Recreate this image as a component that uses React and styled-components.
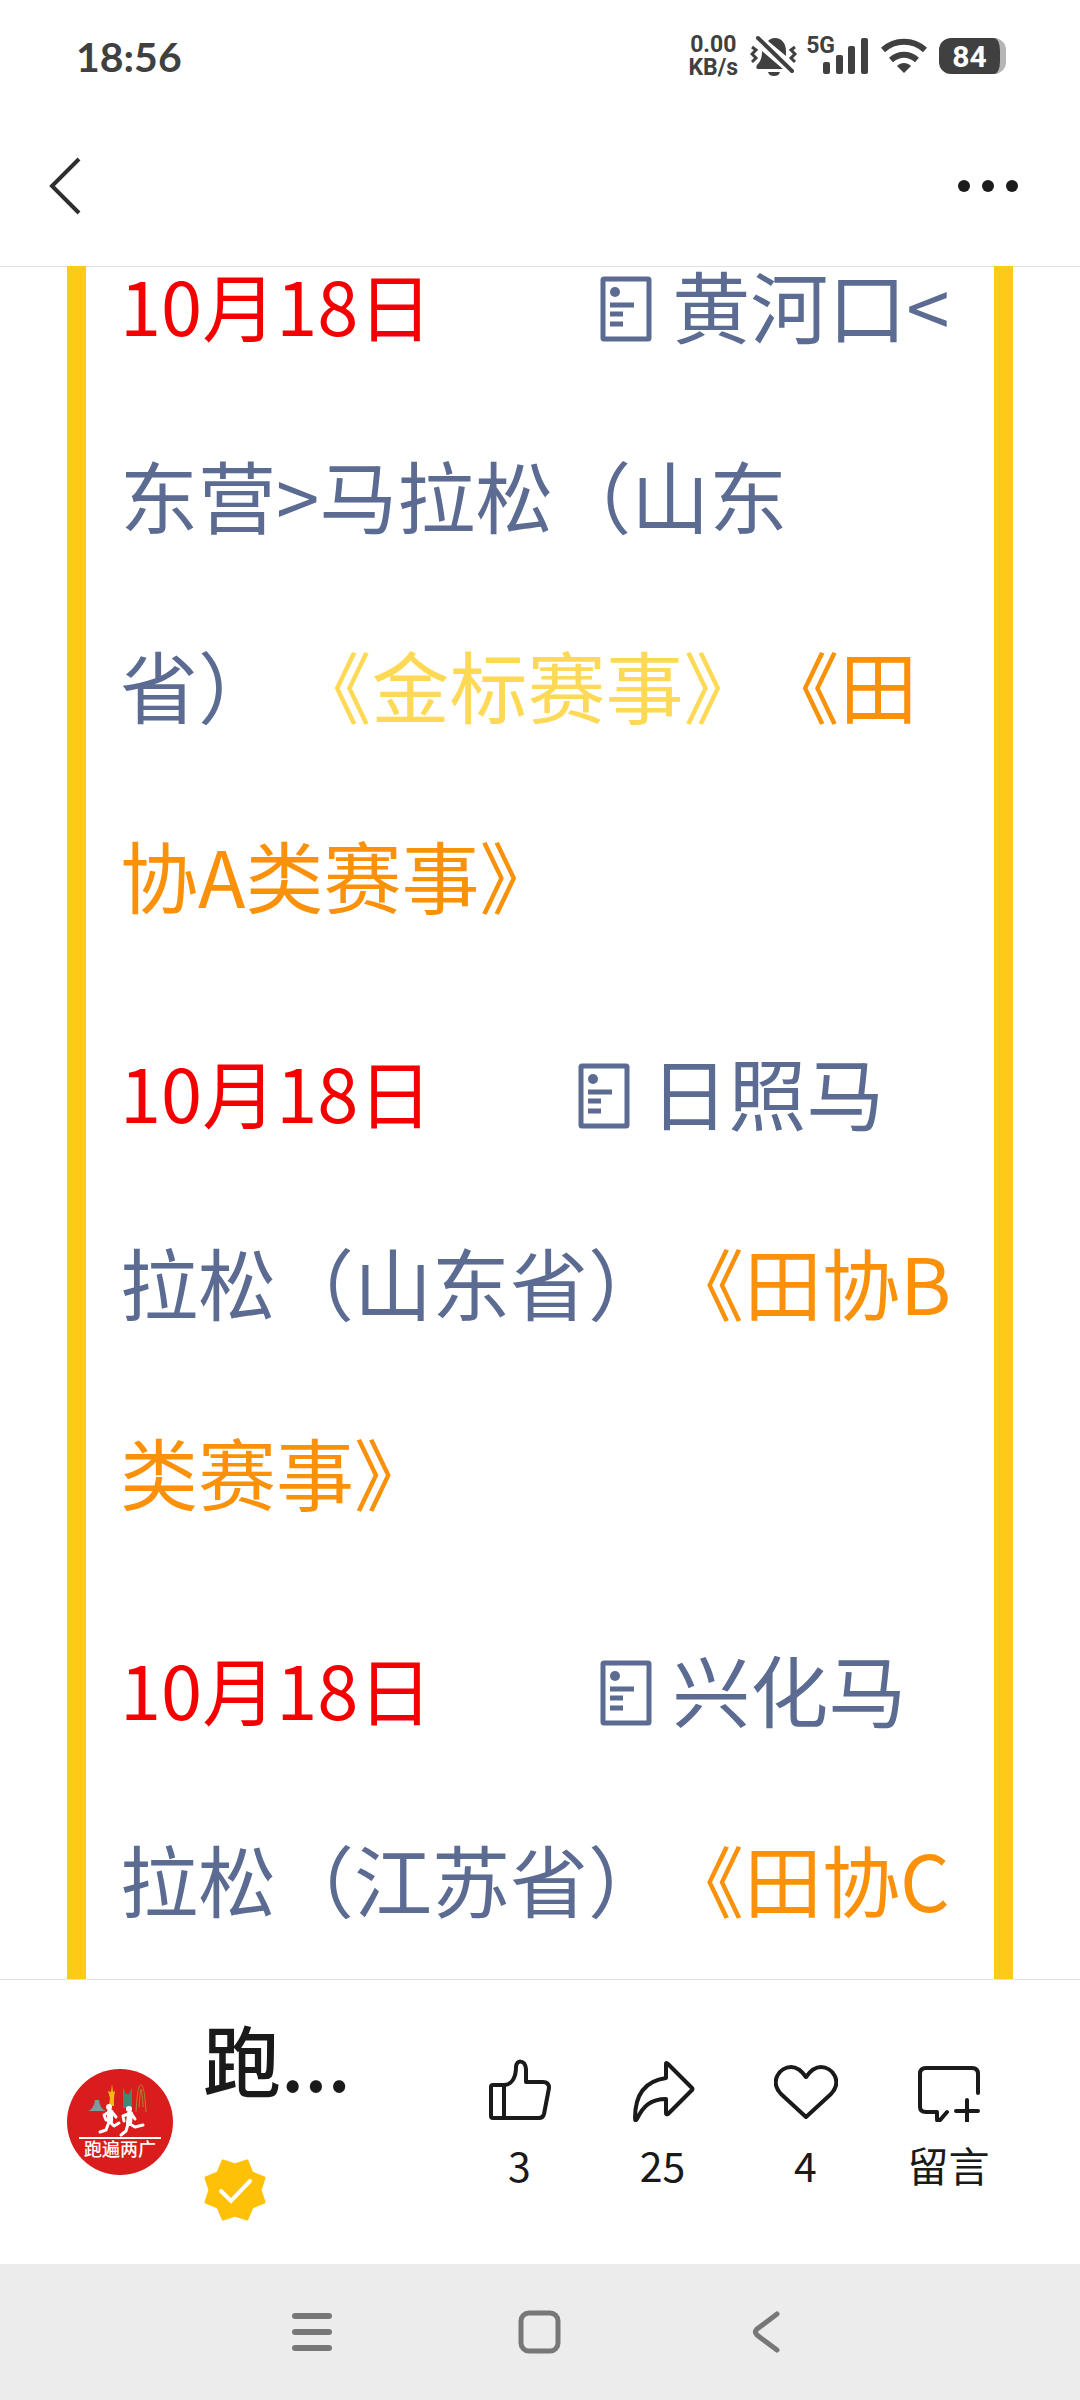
import styled, { createGlobalStyle } from "styled-components";

const races = [
  {
    id: 1,
    date: "10月18日",
    wide: true,
    lines: [
      [{ text: "黄河口<", tone: "link" }],
      [{ text: "东营>马拉松（山东", tone: "link" }],
      [
        { text: "省）\u00a0", tone: "link" },
        { text: "《金标赛事》", tone: "gold" },
        { text: "《田", tone: "orange" },
      ],
      [{ text: "协A类赛事》", tone: "orange" }],
    ],
  },
  {
    id: 2,
    date: "10月18日",
    wide: false,
    lines: [
      [{ text: "日照马", tone: "link" }],
      [
        { text: "拉松（山东省）", tone: "link" },
        { text: "《田协B", tone: "orange" },
      ],
      [{ text: "类赛事》", tone: "orange" }],
    ],
  },
  {
    id: 3,
    date: "10月18日",
    wide: true,
    lines: [
      [{ text: "兴化马", tone: "link" }],
      [
        { text: "拉松（江苏省）", tone: "link" },
        { text: "《田协C", tone: "orange" },
      ],
    ],
  },
];

const BellOffIcon = () => (
  <svg width="48" height="42" viewBox="0 0 48 42" fill="#404040">
    <path d="M18 6C20 4 22 3 25 3c7 0 11 6 11 13v5zM12 16l21 18H8c-2 0-2-2-1-4 4-4 5-8 5-14zM18 37h12c-1 3-3 4-6 4s-5-1-6-4z" />
    <path d="M8 3l34 33" stroke="#404040" strokeWidth="4" strokeLinecap="round" />
    <path
      d="M2 12l4 3-4 4 4 4-4 4M45 12l-4 3 4 4-4 4 4 4"
      fill="none"
      stroke="#404040"
      strokeWidth="3"
    />
  </svg>
);

const SignalIcon = () => (
  <svg width="46" height="36" viewBox="0 0 46 36" fill="#404040">
    <rect x="0" y="24" width="7" height="12" rx="2" />
    <rect x="13" y="17" width="7" height="19" rx="2" />
    <rect x="25" y="8" width="7" height="28" rx="2" />
    <rect x="38" y="0" width="7" height="36" rx="2" />
  </svg>
);

const WifiIcon = () => (
  <svg width="46" height="36" viewBox="0 0 46 36" fill="none" stroke="#404040" strokeWidth="6">
    <path d="M2 12C14 1 32 1 44 12M10 22c8-7 18-7 26 0" />
    <path d="M16 28c4-4 10-4 14 0l-7 7z" fill="#404040" stroke="none" />
  </svg>
);

const NoteIcon = () => (
  <svg width="52" height="66" viewBox="0 0 52 66" fill="none" stroke="#5b6b92" strokeWidth="5">
    <rect x="3" y="3" width="46" height="60" rx="1" />
    <circle cx="15" cy="16" r="5" fill="#5b6b92" stroke="none" />
    <path d="M10 29h24M10 38h13M10 48h13" />
  </svg>
);

const LikeIcon = () => (
  <svg width="64" height="64" viewBox="0 0 64 64">
    <path d="M3 29q0-2 2-2h11c8 0 12-8 12-18 0-7 9-8 10 2v13h17q6 0 6 6l-5 26q-1 4-5 4H5q-2 0-2-2zM16 27v33" />
  </svg>
);

const ShareIcon = () => (
  <svg width="64" height="64" viewBox="0 0 64 64">
    <path d="M35 6q0-2 2 0l24 24q1 1 0 2L37 56q-2 1-2-1V41C20 41 12 48 6 61q-2 3-2-1C4 37 14 23 35 20z" />
  </svg>
);

const HeartIcon = () => (
  <svg width="64" height="64" viewBox="0 0 64 64">
    <path d="M32 59L7 36C-5 23 6 9 17 9q8 0 15 10Q39 9 47 9c11 0 22 14 10 27z" />
  </svg>
);

const CommentIcon = () => (
  <svg width="64" height="64" viewBox="0 0 64 64">
    <path d="M61 35V16q0-6-6-6H9q-6 0-6 6v33q0 5 6 5h11v7q0 4 4 0l6-7M50 42v22M39 53h22" />
  </svg>
);

const VerifiedIcon = () => (
  <svg width="64" height="64" viewBox="0 0 64 64">
    <path
      d="M20 3l12 4 12-4 5 12 12 5-4 12 4 12-12 5-5 12-12-4-12 4-5-12-12-5 4-12-4-12 12-5z"
      fill="#ffc107"
      stroke="#ffc107"
      strokeWidth="3"
      strokeLinejoin="round"
    />
    <path d="M18 33l10 10 19-20" fill="none" stroke="#fff" strokeWidth="4" strokeLinecap="round" />
  </svg>
);

const Logo = () => (
  <svg width="106" height="106" viewBox="0 0 106 106" role="img" aria-label="跑遍两广">
    <circle cx="53" cy="53" r="53" fill="#d91c1c" />
    <path d="M21 42q6-2 7-11h4q1 9 7 11z" fill="#7f9aa0" />
    <path d="M42 37l1-8-2-7 3 1 1-8 1 8 2-1-1 7v8z" fill="#f2b90f" />
    <path d="M56 39V18l3 7h3l3-7v21z" fill="#3d8a7c" />
    <path
      d="M69 43c1-16 2-27 5-27s4 13 5 27M72 38c1-10 1-14 2-18 1 5 2 10 2 18"
      fill="none"
      stroke="#a98a35"
    />
    <g fill="none" stroke="#fff" strokeLinecap="round" strokeLinejoin="round">
      <path d="M43 43v9M63 45l-1 9" strokeWidth="6" />
      <path
        d="M42 43l-5 3 2 5M45 43l4 5M42 53l-3 8-6 2M44 54l3 3 5-3M61 45l-5 2 1 5M64 44l4 6M61 55l-2 7-5 4M63 55l5 3 8-2"
        strokeWidth="3"
      />
    </g>
    <circle cx="42" cy="38" r="3" fill="#fff" />
    <circle cx="62" cy="40" r="3" fill="#fff" />
    <path d="M12 69h82" stroke="#fff" strokeWidth="2" />
    <text x="53" y="87" textAnchor="middle" fontSize="18" fontWeight="500" fill="#fff">
      跑遍两广
    </text>
  </svg>
);

const App = () => {
  return (
    <Page>
      <GlobalStyle />
      <StatusBar>
        <Time>18:56</Time>
        <Indicators>
          <Speed>
            <span>0.00</span>
            <span>KB/s</span>
          </Speed>
          <BellOffIcon />
          <Network>
            <small>5G</small>
            <SignalIcon />
          </Network>
          <WifiIcon />
          <Battery>84</Battery>
        </Indicators>
      </StatusBar>

      <Header>
        <IconButton aria-label="返回">
          <svg width="34" height="60" viewBox="0 0 34 60" fill="none" stroke="#2e2e2e" strokeWidth="4">
            <path d="M31 3L4 30l27 27" />
          </svg>
        </IconButton>
        <IconButton aria-label="更多">
          <svg width="60" height="14" viewBox="0 0 60 14" fill="#1c1c1c">
            <circle cx="6" cy="7" r="6" />
            <circle cx="30" cy="7" r="6" />
            <circle cx="54" cy="7" r="6" />
          </svg>
        </IconButton>
      </Header>

      <Content>
        <Article>
          {races.map((race) => (
            <Race key={race.id}>
              {race.lines.map((line, i) => (
                <Line key={i}>
                  {i === 0 && (
                    <>
                      <RaceDate $wide={race.wide}>{race.date}</RaceDate>
                      <Note>
                        <NoteIcon />
                      </Note>
                    </>
                  )}
                  {line.map((part) =>
                    part.tone === "link" ? (
                      <RaceLink key={part.text} href="#race">
                        {part.text}
                      </RaceLink>
                    ) : (
                      <Level key={part.text} $gold={part.tone === "gold"}>
                        {part.text}
                      </Level>
                    )
                  )}
                </Line>
              ))}
            </Race>
          ))}
        </Article>
      </Content>

      <Footer>
        <Account href="#account">
          <Logo />
          <AccountName>
            <span>跑...</span>
            <VerifiedIcon />
          </AccountName>
        </Account>
        <Actions>
          <Action>
            <LikeIcon />3
          </Action>
          <Action>
            <ShareIcon />
            25
          </Action>
          <Action>
            <HeartIcon />4
          </Action>
          <Action>
            <CommentIcon />
            留言
          </Action>
        </Actions>
      </Footer>

      <SystemNav>
        <IconButton aria-label="菜单">
          <svg width="44" height="44" viewBox="0 0 44 44" stroke="#777" strokeWidth="6" strokeLinecap="round">
            <path d="M5 6h34M5 22h34M5 38h34" />
          </svg>
        </IconButton>
        <IconButton aria-label="主页">
          <svg width="44" height="44" viewBox="0 0 44 44" fill="none" stroke="#777" strokeWidth="5">
            <rect x="3" y="3" width="37" height="38" rx="8" />
          </svg>
        </IconButton>
        <IconButton aria-label="后退">
          <svg width="44" height="44" viewBox="0 0 44 44" fill="none" stroke="#777" strokeWidth="5" strokeLinecap="round">
            <path d="M31 4L11 19q-3 3 0 6l20 15" />
          </svg>
        </IconButton>
      </SystemNav>
    </Page>
  );
};

export default App;

const GlobalStyle = createGlobalStyle`
  * {
    box-sizing: border-box;
  }
  body {
    margin: 0;
    background-color: white;
    font-family: "Noto Sans CJK SC", sans-serif;
    text-spacing-trim: space-all;
  }
  svg {
    display: block;
    flex-shrink: 0;
  }
`;

const Page = styled.div`
  display: flex;
  flex-direction: column;
  min-height: 100vh;
`;

const StatusBar = styled.div`
  display: flex;
  flex-shrink: 0;
  align-items: center;
  justify-content: space-between;
  height: 112px;
  padding: 0 74px 0 76px;
  color: #404040;
`;

const Time = styled.span`
  font-family: Lato, sans-serif;
  font-size: 41px;
  font-weight: bold;
`;

const Indicators = styled.div`
  display: flex;
  align-items: center;
  gap: 12px;
`;

const Speed = styled.div`
  display: flex;
  flex-direction: column;
  align-items: center;
  font-family: Roboto, sans-serif;
  font-size: 23px;
  font-weight: bold;
  line-height: 23px;
`;

const Network = styled.div`
  display: flex;
  align-items: flex-end;
  margin-left: -4px;
  small {
    align-self: flex-start;
    margin-right: -12px;
    font-family: Roboto, sans-serif;
    font-size: 23px;
    font-weight: bold;
    line-height: 16px;
  }
`;

const Battery = styled.span`
  width: 67px;
  height: 36px;
  border-right: 6px solid #b5b5b5;
  border-radius: 12px;
  background-color: #404040;
  color: white;
  font-family: Roboto, sans-serif;
  font-size: 30px;
  font-weight: bold;
  line-height: 37px;
  text-align: center;
`;

const Header = styled.header`
  display: flex;
  flex-shrink: 0;
  align-items: center;
  justify-content: space-between;
  height: 154px;
  padding: 0 62px 6px 48px;
`;

const IconButton = styled.button`
  padding: 0;
  border: none;
  background: none;
`;

const Content = styled.main`
  display: flex;
  flex: 1;
  padding: 0 67px;
  box-shadow: inset 0 1px 0 #e1e1e1;
`;

const Article = styled.article`
  display: flex;
  flex: 1;
  flex-direction: column;
  gap: 141px;
  padding: 0 34px;
  border: solid #fdcb17;
  border-width: 0 19px;
  font-size: 78px;
  line-height: 76px;
`;

const Race = styled.section`
  display: flex;
  flex-direction: column;
  gap: 114px;
`;

const Line = styled.div`
  display: flex;
  align-items: center;
  height: 76px;
  white-space: nowrap;
`;

const RaceDate = styled.span`
  margin-right: ${(props) => (props.$wide ? "168px" : "146px")};
  color: #f50000;
  font-size: 74px;
`;

const Note = styled.span`
  margin-right: 20px;
  padding-top: 10px;
`;

const RaceLink = styled.a`
  color: #5b6b92;
  text-decoration: none;
`;

const Level = styled.span`
  color: ${(props) => (props.$gold ? "#fdd955" : "#fb9009")};
`;

const Footer = styled.footer`
  display: flex;
  flex-shrink: 0;
  align-items: center;
  justify-content: space-between;
  height: 285px;
  padding: 0 60px 0 67px;
  border-top: 1px solid #e1e1e1;
`;

const Account = styled.a`
  display: flex;
  align-items: center;
  gap: 30px;
  color: #1a1a1a;
  text-decoration: none;
`;

const AccountName = styled.span`
  display: flex;
  flex-direction: column;
  gap: 40px;
  padding-bottom: 24px;
  font-size: 78px;
  font-weight: 500;
  line-height: 120px;
`;

const Actions = styled.div`
  display: flex;
`;

const Action = styled.button`
  display: flex;
  flex-direction: column;
  align-items: center;
  gap: 12px;
  width: 143px;
  padding: 8px 0 0;
  border: none;
  background: none;
  color: #1a1a1a;
  font-family: inherit;
  font-size: 41px;
  line-height: 60px;
  svg {
    fill: none;
    stroke: #1a1a1a;
    stroke-width: 4px;
    stroke-linecap: round;
    stroke-linejoin: round;
  }
`;

const SystemNav = styled.nav`
  display: flex;
  flex-shrink: 0;
  align-items: center;
  justify-content: center;
  gap: 184px;
  height: 136px;
  background-color: #ececec;
`;
